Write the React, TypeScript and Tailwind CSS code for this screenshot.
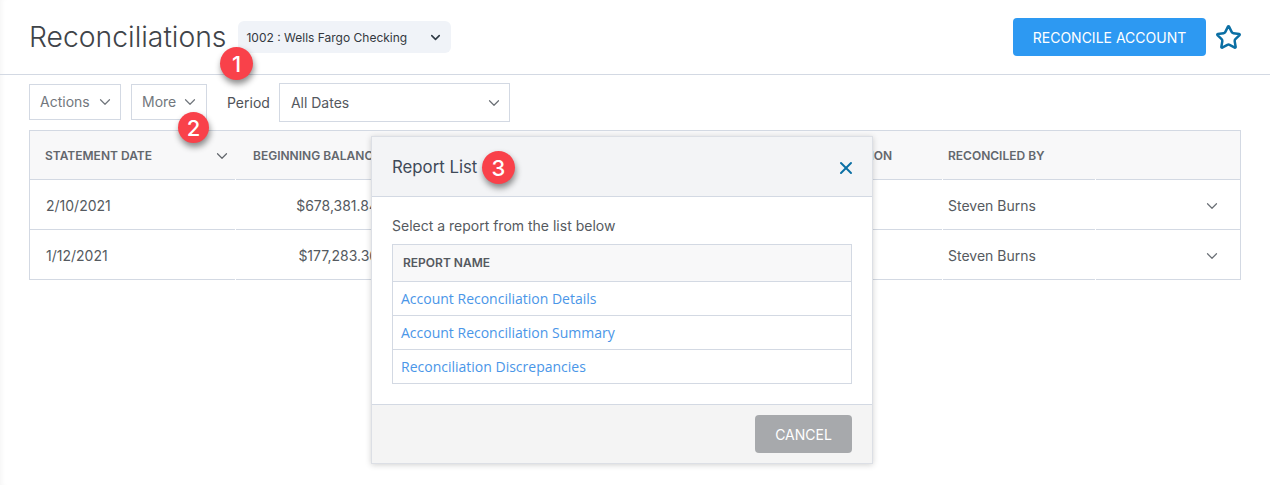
import { ChevronDown, Star, X } from "lucide-react";

function Badge({ n, className }: { n: string; className: string }) {
  return (
    <div
      className={`absolute flex items-center justify-center rounded-full bg-[#f9414a] text-[22px] font-medium leading-none text-white shadow-[1px_4px_6px_rgba(0,0,0,0.45)] font-['Inter',sans-serif] ${className}`}
    >
      {n}
    </div>
  );
}

const cols = "grid grid-cols-[205px_159px_395px_150px_152px_1fr] gap-x-px";

function Row({ date, amount, last }: { date: string; amount: string; last?: boolean }) {
  const cell = last
    ? "flex h-[51px] items-center border-y border-[#d3d9e3] pt-[2px]"
    : "flex h-[50px] items-center border-t border-[#d3d9e3] pt-[2px]";
  return (
    <div className={`${cols} text-[14px] text-[#555a60]`}>
      <div className={`${cell} pl-[16px]`}>{date}</div>
      <div className={`${cell} justify-end pr-[17px]`}>{amount}</div>
      <div className={cell} />
      <div className={cell} />
      <div className={`${cell} pl-[5px]`}>Steven Burns</div>
      <div className={`${cell} justify-end pr-[19px]`}>
        <ChevronDown size={18} strokeWidth={1.6} className="text-[#6b7076]" />
      </div>
    </div>
  );
}

export default function App() {
  return (
    <div className="relative h-[485px] w-[1270px] overflow-hidden bg-white font-['Inter',sans-serif] shadow-[inset_5px_0_5px_-3px_rgba(0,0,0,0.04)]">
      <header className="flex h-[75px] items-start border-b border-[#d3d9e3] pl-[29px] pr-[28px]">
        <h1 className="mt-[18px] text-[28.3px] font-[350] leading-[38px] text-[#3f4449]">Reconciliations</h1>
        <div className="ml-[12px] mt-[21px] flex h-[32px] w-[213px] items-center justify-between rounded-[6px] bg-[#f0f3f8] pl-[8px] pr-[8px] text-[12px] text-[#33383e]">
          <span className="pt-[2px]">1002 : Wells Fargo Checking</span>
          <ChevronDown size={15} strokeWidth={2.5} className="text-[#2f3a45]" />
        </div>
        <div className="ml-auto mt-[18px] flex items-center gap-[9px]">
          <button className="h-[38px] w-[193px] rounded-[4px] bg-[#2d99f2] text-[14px] text-white">RECONCILE ACCOUNT</button>
          <Star size={27} strokeWidth={2.2} className="text-[#0b6fa4]" />
        </div>
      </header>

      <div className="flex items-start pl-[29px] pt-[8px]">
        <button className="mt-px flex h-[36px] w-[92px] items-center gap-[6px] border border-[#d3d9e3] pb-[1px] pl-[10px] text-[14px] text-[#72777d]">
          Actions
          <ChevronDown size={18} strokeWidth={1.6} />
        </button>
        <button className="ml-[10px] mt-px flex h-[36px] w-[76px] items-center gap-[5px] border border-[#d3d9e3] pb-[1px] pl-[10px] text-[14px] text-[#72777d]">
          More
          <ChevronDown size={18} strokeWidth={1.6} />
        </button>
        <span className="ml-[20px] mt-[10px] text-[14px] leading-[20px] text-[#4f5358]">Period</span>
        <div className="ml-[9px] flex h-[39px] w-[231px] items-center justify-between border border-[#d3d9e3] pl-[11px] pr-[6px] text-[14px] text-[#55595f]">
          All Dates
          <ChevronDown size={18} strokeWidth={1.6} className="text-[#6b7076]" />
        </div>
      </div>

      <div className="ml-[29px] mt-[8px] w-[1212px] border-x border-t border-[#d3d9e3]">
        <div className={`${cols} h-[48px] items-center bg-[#f8f8f9] pt-[2px] text-[12px] font-semibold text-[#63676d]`}>
          <div className="flex items-center justify-between pl-[15px] pr-[4px]">
            STATEMENT DATE
            <ChevronDown size={18} strokeWidth={1.6} />
          </div>
          <div className="whitespace-nowrap pl-[17px]">BEGINNING BALANCE</div>
          <div />
          <div className="pl-[19px]">DESCRIPTION</div>
          <div className="pl-[5px]">RECONCILED BY</div>
          <div />
        </div>
        <Row date="2/10/2021" amount="$678,381.84" />
        <Row date="1/12/2021" amount="$177,283.36" last />
      </div>

      <div className="absolute left-[371px] top-[136px] flex h-[328px] w-[502px] flex-col border border-[#dcdfe5] bg-white shadow-[0_1px_6px_rgba(0,0,0,0.18)]">
        <div className="flex h-[60px] items-center justify-between border-b border-[#d3d9e3] bg-[#f3f4f6] pl-[20px] pr-[16px] pt-[3px]">
          <span className="text-[16.8px] text-[#3f4a58]">Report List</span>
          <X size={20} strokeWidth={2.4} className="text-[#0b6fa4]" />
        </div>
        <div className="flex-1 px-[20px] pt-[19px]">
          <p className="text-[14px] leading-[20px] text-[#555a60]">Select a report from the list below</p>
          <div className="mt-[8px] border border-[#d3d9e3] font-['Open_Sans',sans-serif] text-[14px] text-[#4a96e8]">
            <div className="flex h-[36px] items-center bg-[#f8f8f9] pl-[10px] font-['Inter',sans-serif] text-[12px] font-semibold text-[#55595f]">REPORT NAME</div>
            <div className="flex h-[34px] items-center border-t border-[#d3d9e3] pl-[8px]">Account Reconciliation Details</div>
            <div className="flex h-[34px] items-center border-t border-[#d3d9e3] pl-[8px]">Account Reconciliation Summary</div>
            <div className="flex h-[34px] items-center border-t border-[#d3d9e3] pl-[8px]">Reconciliation Discrepancies</div>
          </div>
        </div>
        <div className="flex h-[59px] items-center justify-end border-t border-[#d3d9e3] bg-[#f4f4f4] pr-[20px]">
          <button className="h-[38px] w-[97px] rounded-[4px] bg-[#a7a9ac] text-[14px] text-white">CANCEL</button>
        </div>
      </div>

      <Badge n="1" className="left-[220px] top-[47px] h-[33px] w-[33px]" />
      <Badge n="2" className="left-[178px] top-[112px] h-[31px] w-[31px]" />
      <Badge n="3" className="left-[482px] top-[151px] h-[33px] w-[33px]" />
    </div>
  );
}
